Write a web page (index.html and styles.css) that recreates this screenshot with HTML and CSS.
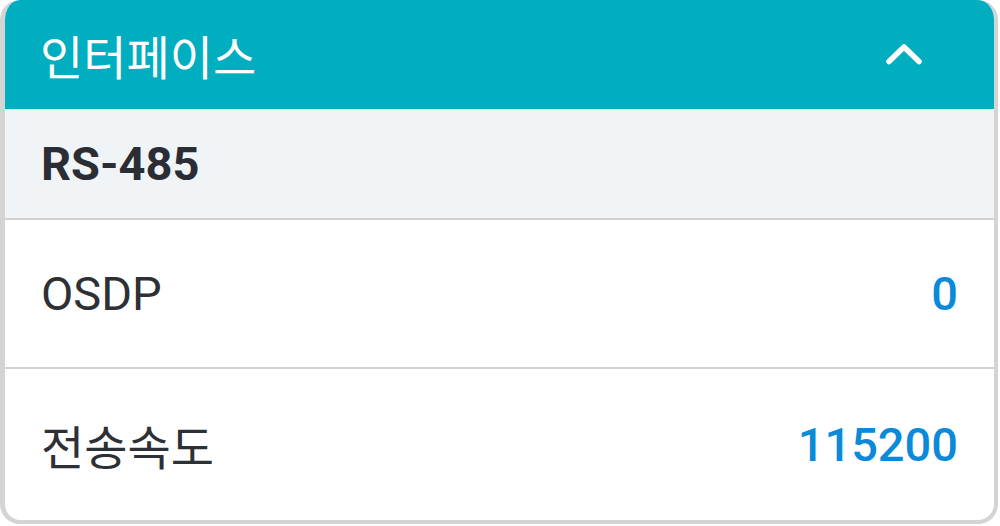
FILE: index.html
```html
<!DOCTYPE html>
<html lang="ko">
<head>
<meta charset="utf-8">
<link rel="stylesheet" href="styles.css">
</head>
<body>
<div class="card">
  <div class="card-header">
    <span class="title">인터페이스</span>
    <svg class="chevron" width="40" height="24" viewBox="0 0 40 24">
      <polyline points="3,20.5 18,6 33,20.5" fill="none" stroke="#ffffff" stroke-width="5.5" stroke-linecap="round" stroke-linejoin="round"/>
    </svg>
  </div>
  <div class="section">RS-485</div>
  <div class="row">
    <span class="label latin">OSDP</span>
    <span class="value">0</span>
  </div>
  <div class="row last">
    <span class="label">전송속도</span>
    <span class="value">115200</span>
  </div>
</div>
</body>
</html>
```
FILE: styles.css
```css
html, body {
  margin: 0;
  padding: 0;
  background: #ffffff;
}
body {
  width: 1000px;
  height: 526px;
  font-family: Roboto, "Noto Sans CJK KR", sans-serif;
}
.card {
  box-sizing: border-box;
  width: 998px;
  height: 524px;
  border: 4px solid #d4d4d4;
  border-top: none;
  border-left-width: 5px;
  border-radius: 20px;
  overflow: hidden;
  display: flex;
  flex-direction: column;
}
.card-header {
  height: 109px;
  margin: 0 -4px 0 -5px;
  background: #00aec0;
  display: flex;
  align-items: center;
  justify-content: space-between;
  padding: 0 72px 0 40px;
  flex-shrink: 0;
}
.title {
  font-family: "Noto Sans CJK KR", sans-serif;
  color: #ffffff;
  font-size: 47px;
  font-weight: 400;
}
.chevron {
  display: block;
  margin-top: -4px;
}
.section {
  height: 109px;
  background: #f0f4f7;
  border-bottom: 2px solid #d2d2d2;
  display: flex;
  align-items: center;
  padding: 0 36px;
  font-size: 47px;
  font-weight: 700;
  color: #2a2d33;
  flex-shrink: 0;
}
.row {
  height: 147px;
  border-bottom: 2px solid #d2d2d2;
  display: flex;
  align-items: center;
  justify-content: space-between;
  padding: 0 36px;
  flex-shrink: 0;
}
.row.last {
  border-bottom: none;
  flex: 1;
}
.label {
  font-family: "Noto Sans CJK KR", sans-serif;
  font-size: 47px;
  color: #2d3035;
}
.label.latin {
  font-family: Roboto, sans-serif;
  font-weight: 400;
  font-size: 47px;
}
.value {
  font-size: 47px;
  font-weight: 500;
  color: #0a8ad8;
}
```
